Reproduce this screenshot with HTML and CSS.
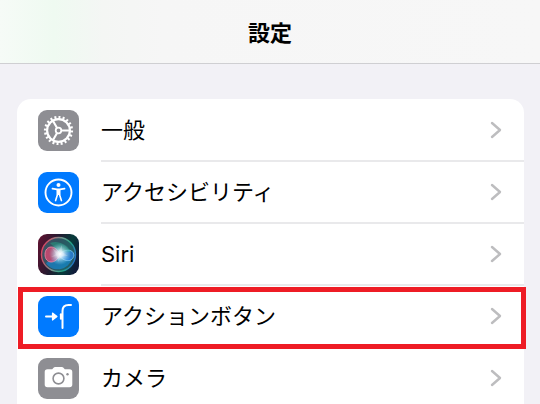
FILE: index.html
```html
<!DOCTYPE html>
<html lang="ja">
<head>
    <meta charset="UTF-8">
    <meta name="viewport" content="width=device-width, initial-scale=1.0">
    <title>設定</title>
    <link rel="stylesheet" href="styles.css">
</head>
<body>
    <header class="navbar">
        <h1>設定</h1>
    </header>

    <main class="content">
        <nav class="settings-list">
            <a class="row" href="#general">
                <svg class="icon icon-gray" viewBox="0 0 41 41" fill="none" stroke="#fff">
                    <circle cx="20.5" cy="20.5" r="13.2" stroke-width="2.8" pathLength="80" stroke-dasharray="1.9 2.1"/>
                    <circle cx="20.5" cy="20.5" r="11.4" stroke-width="2.2"/>
                    <circle cx="20.5" cy="20.5" r="2.8" stroke-width="1.8"/>
                    <path d="M23.3 20.5H31.7M19.1 18.1L14.9 10.8M19.1 22.9L14.9 30.2" stroke-width="2.1"/>
                </svg>
                <span class="label">一般</span>
                <svg class="chevron" viewBox="0 0 12 18"><path d="M2 2l8 7-8 7"/></svg>
            </a>
            <a class="row" href="#accessibility">
                <svg class="icon icon-blue" viewBox="0 0 41 41">
                    <circle cx="20.5" cy="20.5" r="13" fill="none" stroke="#fff" stroke-width="1.9"/>
                    <circle cx="20.5" cy="13" r="2" fill="#fff"/>
                    <path d="M14.4 16.6L19 17.4H22L26.6 16.6M19.5 18V22.5L17.6 28.6M21.5 18V22.5L23.4 28.6" fill="none" stroke="#fff" stroke-width="1.6" stroke-linecap="round" stroke-linejoin="round"/>
                    <path d="M18.7 17.2H22.3V23H18.7Z" fill="#fff"/>
                </svg>
                <span class="label">アクセシビリティ</span>
                <svg class="chevron" viewBox="0 0 12 18"><path d="M2 2l8 7-8 7"/></svg>
            </a>
            <a class="row" href="#siri">
                <svg class="icon" viewBox="0 0 41 41">
                    <defs>
                        <linearGradient id="siri-bg" x1="0" y1="0.2" x2="1" y2="0.5">
                            <stop offset="0" stop-color="#5c1230"/>
                            <stop offset="0.45" stop-color="#211b30"/>
                            <stop offset="0.75" stop-color="#073c3b"/>
                            <stop offset="1" stop-color="#101d3b"/>
                        </linearGradient>
                        <linearGradient id="siri-ring" x1="0" y1="0.3" x2="1" y2="0.6">
                            <stop offset="0" stop-color="#e0405f"/>
                            <stop offset="0.5" stop-color="#6d9a90"/>
                            <stop offset="0.75" stop-color="#25a583"/>
                            <stop offset="1" stop-color="#2472c8"/>
                        </linearGradient>
                        <radialGradient id="siri-glow">
                            <stop offset="0" stop-color="#fff"/>
                            <stop offset="0.3" stop-color="#e6f7ff" stop-opacity="0.85"/>
                            <stop offset="1" stop-color="#7fd0ef" stop-opacity="0"/>
                        </radialGradient>
                    </defs>
                    <rect width="41" height="41" fill="url(#siri-bg)"/>
                    <circle cx="20.5" cy="20.5" r="17" fill="#3b8790" fill-opacity="0.5" stroke="url(#siri-ring)" stroke-width="1.4"/>
                    <path d="M8 29C13 38 29 38 34 25L22 20Z" fill="#168bd5" fill-opacity="0.65"/>
                    <path d="M22 20.5C18 10 7 11 7 20.5S18 31 22 20.5Z" fill="#ef4776" fill-opacity="0.7" stroke="#f58aa8" stroke-width="0.8"/>
                    <path d="M21 21C25 15 35 14 36 21C35 29 25 28 21 21Z" fill="#2d83e6" fill-opacity="0.75" stroke="#7cc4f2" stroke-width="0.8"/>
                    <path d="M12 9C20 6 28 10 33 18L22 19Z" fill="#24b98f" fill-opacity="0.4"/>
                    <circle cx="22" cy="20" r="11" fill="url(#siri-glow)"/>
                    <path d="M14 14L20 18L24 11L24 18L30 22L24 22L20 28L19 22L13 23L18 20Z" fill="#fff" fill-opacity="0.2"/>
                </svg>
                <span class="label">Siri</span>
                <svg class="chevron" viewBox="0 0 12 18"><path d="M2 2l8 7-8 7"/></svg>
            </a>
            <a class="row highlighted" href="#action-button">
                <svg class="icon icon-blue" viewBox="0 0 41 41" fill="none" stroke="#fff" stroke-width="2" stroke-linecap="round">
                    <path d="M8 20.5H15"/>
                    <path d="M14.5 17L19 20.5L14.5 24Z" fill="#fff" stroke-width="1.2" stroke-linejoin="round"/>
                    <path d="M24.5 32V15Q24.5 9 30.5 9H33"/>
                    <path d="M23 18.3V22.7" stroke-width="2.2"/>
                </svg>
                <span class="label">アクションボタン</span>
                <svg class="chevron" viewBox="0 0 12 18"><path d="M2 2l8 7-8 7"/></svg>
            </a>
            <a class="row" href="#camera">
                <svg class="icon icon-gray" viewBox="0 0 41 41">
                    <path d="M9.5 11.2H14.2L15.8 9.4Q16.3 8.9 17 8.9H24Q24.7 8.9 25.2 9.4L26.8 11.2H31.5Q34.3 11.2 34.3 14V26.5Q34.3 29.3 31.5 29.3H9.5Q6.7 29.3 6.7 26.5V14Q6.7 11.2 9.5 11.2Z" fill="#fff"/>
                    <circle cx="20.5" cy="20.5" r="5.4" fill="none" stroke="#8e8e93" stroke-width="1.6"/>
                    <circle cx="29.5" cy="16.2" r="1.2" fill="#8e8e93"/>
                </svg>
                <span class="label">カメラ</span>
                <svg class="chevron" viewBox="0 0 12 18"><path d="M2 2l8 7-8 7"/></svg>
            </a>
        </nav>
    </main>
</body>
</html>
```

FILE: styles.css
```css
* {
    box-sizing: border-box;
}
body {
    margin: 0;
    height: 100vh;
    overflow: hidden;
    background: #f2f1f6;
    color: #000;
    font-family: Inter, 'Noto Sans CJK JP', sans-serif;
}
.navbar {
    display: flex;
    align-items: center;
    justify-content: center;
    height: 64px;
    padding-top: 2px;
    border-bottom: 1px solid #cfcfd2;
    background: linear-gradient(90deg, #f6fbf7 0%, #effaf1 10%, #f4f6f4 19%, #f6f6f6 30%, #f7f7f7 100%);
}
h1 {
    margin: 0;
    font-size: 22px;
    line-height: 32px;
    font-weight: 700;
}
.content {
    padding: 35px 16px 0 17px;
}
.settings-list {
    background: #fff;
    border-radius: 14px 14px 0 0;
}
.row {
    position: relative;
    display: flex;
    align-items: center;
    height: 62px;
    padding-left: 21px;
    color: inherit;
    text-decoration: none;
}
.icon {
    flex: none;
    width: 41px;
    height: 41px;
    margin-right: 22px;
    border-radius: 9px;
}
.icon-gray {
    background: #8e8e93;
}
.icon-blue {
    background: #007aff;
}
.label {
    flex: 1;
    font-size: 22px;
    line-height: 32px;
}
.chevron {
    width: 12px;
    height: 18px;
    margin-right: 22px;
    fill: none;
    stroke: #bdbdbf;
    stroke-width: 2.4;
    stroke-linecap: round;
    stroke-linejoin: round;
}
/* separator starts at the label, not under the icon */
.row::before {
    content: "";
    position: absolute;
    left: 84px;
    right: 0;
    bottom: -1px;
    height: 2px;
    background: #e9e9eb;
}
.highlighted::after {
    content: "";
    position: absolute;
    inset: 2px -2px -2px 1px;
    z-index: 1;
    border: 5px solid #ee1c25;
}
```
